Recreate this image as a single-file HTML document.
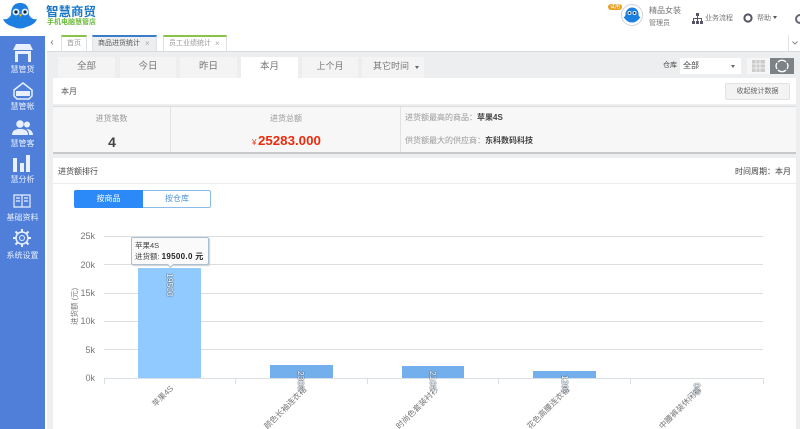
<!DOCTYPE html>
<html lang="zh"><head><meta charset="utf-8"><style>
*{box-sizing:border-box}
html,body{margin:0;padding:0;width:800px;height:429px;overflow:hidden}
#w{position:absolute;left:0;top:0;width:800px;height:429px;overflow:hidden;background:#fff;font-family:"Liberation Sans","Noto Sans CJK SC",sans-serif;font-size:9px;color:#555}
.a{position:absolute;white-space:nowrap}
.side{left:0;top:36px;width:45px;height:393px;background:#4f7fd9}
.si{color:#e8f0ff;font-size:8px;line-height:11px;width:45px;text-align:center;left:0}
.tb{top:35px;height:16px;background:#fff;border:1px solid #dfe3e6;border-bottom:0;font-size:7px;line-height:14px;color:#999;padding-left:5px}
.tb span{position:absolute;top:0;color:#aaa;font-size:8px}
.pt{top:57px;height:21px;background:#f4f4f4;font-size:9.500px;line-height:19px;text-align:center;color:#777}
.g{left:104px;width:659px;height:1px;background:#dedede}
.yl{width:30px;left:65px;text-align:right;font-size:9px;color:#777}
.tk{top:378px;width:1px;height:6px;background:#d8dfe6}
.bar{position:absolute}
.rl{font-size:8px;line-height:10px;color:#777;transform:rotate(-45deg);transform-origin:right top;text-align:right}
.rv{font-size:8.500px;line-height:10px;color:#fff;text-shadow:0 0 1px #456,0 0 1px #456,0 0 1px #678;transform:rotate(90deg);transform-origin:left top}
</style></head><body><div id="w">
<svg class="a" style="left:2px;top:1px" width="36" height="30" viewBox="0 0 36 30">
<path d="M1 18C5 19 7 17 9 14C9 5 13 2 18 2C24 2 27 5 27 14C29 17 31 19 35 18C33 23 28 25 24 26C21 28 15 28 12 26C8 25 3 23 1 18Z" fill="#1d7fe0"/>
<circle cx="14" cy="11" r="3.400" fill="#dff1ff"/><circle cx="23" cy="11" r="3.400" fill="#dff1ff"/>
<circle cx="14" cy="11" r="1.600" fill="#123"/><circle cx="23" cy="11" r="1.600" fill="#123"/>
<path d="M17 13h3l-1.500 3z" fill="#f5c518"/>
</svg>
<div class="a" style="left:46px;top:4px;font-size:12.500px;line-height:16px;font-weight:bold;color:#1b78c8">智慧商贸</div>
<div class="a" style="left:47px;top:18px;font-size:7px;line-height:9px;font-weight:bold;color:#6cbb3c">手机电脑慧管店</div>

<div class="a" style="left:608px;top:4px;width:14px;height:6px;background:#e8a020;border-radius:3px;font-size:5px;line-height:6px;color:#fff;text-align:center">试用</div>
<svg class="a" style="left:621px;top:4px" width="22" height="22" viewBox="0 0 22 22"><circle cx="11" cy="11" r="10.500" fill="#fff" stroke="#cdd2d8"/><path d="M2.500 13C4.500 13 4.500 11 4.500 9C5.500 5 9 3.500 11 3.500C14 3.500 16.500 5 17.500 9C17.500 11 17.500 13 19.500 13C17 17 14 18.500 11 18.500C8 18.500 5 17 2.500 13Z" fill="#1d7fe0"/><circle cx="8.500" cy="9" r="2" fill="#def"/><circle cx="13.500" cy="9" r="2" fill="#def"/><circle cx="8.500" cy="9" r="1" fill="#123"/><circle cx="13.500" cy="9" r="1" fill="#123"/></svg>
<div class="a" style="left:649px;top:5px;font-size:8px;line-height:11px;color:#777">精品女装</div>
<div class="a" style="left:649px;top:19px;font-size:7px;line-height:10px;color:#777">管理员</div>
<svg class="a" style="left:692px;top:13px" width="11" height="11" viewBox="0 0 11 11"><path d="M4 0h3v3H4zM0 8h3v3H0zM4 8h3v3H4zM8 8h3v3H8zM5 3h1v2h4v3H9V6H6v2H5V6H2v2H1V5h4z" fill="#556"/></svg>
<div class="a" style="left:705px;top:13px;font-size:7px;line-height:11px;color:#777">业务流程</div>
<svg class="a" style="left:743px;top:13px" width="10" height="10" viewBox="0 0 10 10"><circle cx="5" cy="5" r="3.600" fill="none" stroke="#556" stroke-width="2"/></svg>
<div class="a" style="left:757px;top:14px;font-size:7px;line-height:10px;color:#777">帮助</div>
<div class="a" style="left:773px;top:16px;border:2.500px solid transparent;border-top:3px solid #555;border-bottom:0"></div>
<svg class="a" style="left:794px;top:13px" width="6" height="12" viewBox="0 0 6 12"><circle cx="6" cy="6" r="4" fill="none" stroke="#667" stroke-width="2"/></svg>

<div class="a side"></div>
<svg class="a" style="left:13px;top:44px" width="20" height="18" viewBox="0 0 20 18"><path d="M3 0h14l3 6H0z" fill="#e8f0ff"/><path d="M2 7h16v11H2z" fill="#e8f0ff"/><path d="M5 10h10v8H5z" fill="#4f7fd9"/></svg>
<div class="a si" style="top:64px">慧管货</div>
<svg class="a" style="left:13px;top:82px" width="20" height="18" viewBox="0 0 20 18"><path d="M1 8L10 1l9 7v6l-3 3H4l-3-3z" fill="none" stroke="#e8f0ff" stroke-width="1.500"/><path d="M3 9h14v5H3z" fill="#e8f0ff"/></svg>
<div class="a si" style="top:101px">慧管帐</div>
<svg class="a" style="left:12px;top:120px" width="21" height="15" viewBox="0 0 21 15"><circle cx="8" cy="4" r="3.800" fill="#e8f0ff"/><path d="M0 15c0-5 4-6 8-6s8 1 8 6z" fill="#e8f0ff"/><circle cx="15" cy="4.500" r="3" fill="#e8f0ff"/><path d="M14 9c4 0 7 2 7 6h-4c0-3-1-5-3-6z" fill="#e8f0ff"/></svg>
<div class="a si" style="top:138px">慧管客</div>
<svg class="a" style="left:13px;top:155px" width="18" height="17" viewBox="0 0 18 17"><path d="M0 3h4v14H0zM7 8h4v9H7zM13 0h4v17h-4z" fill="#e8f0ff"/></svg>
<div class="a si" style="top:174px">慧分析</div>
<svg class="a" style="left:13px;top:194px" width="18" height="14" viewBox="0 0 18 14"><path d="M1 1h16v12H1zM9 1v12M3 4h4M3 7h4M11 4h4M11 7h4" fill="none" stroke="#e8f0ff" stroke-width="1.200"/></svg>
<div class="a si" style="top:212px">基础资料</div>
<svg class="a" style="left:13px;top:229px" width="18" height="18" viewBox="0 0 18 18"><circle cx="9" cy="9" r="6" fill="none" stroke="#e8f0ff" stroke-width="1.500"/><circle cx="9" cy="9" r="2.500" fill="none" stroke="#e8f0ff"/><path d="M9 0v3M9 15v3M0 9h3M15 9h3M2.500 2.500l2 2M13.500 13.500l2 2M2.500 15.500l2-2M13.500 4.500l2-2" stroke="#e8f0ff" stroke-width="2"/></svg>
<div class="a si" style="top:250px">系统设置</div>

<div class="a" style="left:47px;top:51px;width:753px;height:378px;background:#eceef0;border-top:1px solid #d8dbde"></div>
<div class="a" style="left:45px;top:36px;width:2px;height:393px;background:#fff"></div>
<div class="a" style="left:47px;top:36px;width:10px;height:15px;font-size:10px;line-height:13px;color:#666;text-align:center">‹</div>
<div class="a tb" style="left:61px;width:26px;border-top:2px solid #8bc34a">首页</div>
<div class="a tb" style="left:92px;width:65px;background:#eceef0;border-top:2px solid #3b7dc9;color:#555">商品进货统计<span style="left:52px">×</span></div>
<div class="a tb" style="left:163px;width:64px;border-top:2px solid #8bc34a">员工业绩统计<span style="left:51px">×</span></div>
<div class="a" style="left:788px;top:35px;width:12px;height:16px;background:#fff;border-left:1px solid #e3e3e3"></div>
<svg class="a" style="left:792px;top:41px" width="6" height="4" viewBox="0 0 6 4"><path d="M.5.500L3 3 5.500.500" fill="none" stroke="#888"/></svg>

<div class="a pt" style="left:58px;width:57px">全部</div>
<div class="a pt" style="left:120px;width:56px">今日</div>
<div class="a pt" style="left:180px;width:57px">昨日</div>
<div class="a pt" style="left:241px;width:57px;background:#fff">本月</div>
<div class="a pt" style="left:302px;width:56px;font-size:9px">上个月</div>
<div class="a pt" style="left:362px;width:62px;text-align:left;padding-left:11px;font-size:9px">其它时间</div>
<div class="a" style="left:415px;top:66px;border:2.500px solid transparent;border-top:3px solid #666;border-bottom:0"></div>
<div class="a" style="left:663px;top:60px;font-size:7px;line-height:11px;color:#444">仓库</div>
<div class="a" style="left:680px;top:58px;width:61px;height:16px;background:#fff;font-size:8px;line-height:15px;padding-left:3px;color:#444">全部</div>
<div class="a" style="left:731px;top:65px;border:2.500px solid transparent;border-top:3px solid #666;border-bottom:0"></div>
<div class="a" style="left:747px;top:58px;width:23px;height:16px;background:#f6f6f6"></div>
<svg class="a" style="left:752px;top:60px" width="13" height="12" viewBox="0 0 13 12"><path d="M0 0h13v12H0z" fill="#ccc"/><path d="M4 0v12M8 0v12M0 4h13M0 8h13" stroke="#eee"/></svg>
<div class="a" style="left:770px;top:58px;width:24px;height:16px;background:#7d8286"></div>
<svg class="a" style="left:775px;top:59px" width="14" height="14" viewBox="0 0 14 14"><path d="M3 3A5.500 5.500 0 0 1 11 3M11 11A5.500 5.500 0 0 1 3 11M2 4A5.500 5.500 0 0 0 2 10M12 4A5.500 5.500 0 0 1 12 10" fill="none" stroke="#fff" stroke-width="1.300"/></svg>

<div class="a" style="left:53px;top:78px;width:743px;height:26px;background:#fff"></div>
<div class="a" style="left:61px;top:86px;font-size:8px;line-height:11px;color:#555">本月</div>
<div class="a" style="left:725px;top:83px;width:65px;height:17px;background:#f3f3f3;border:1px solid #e2e2e2;border-radius:2px;font-size:7px;line-height:15px;text-align:center;color:#666">收起统计数据</div>

<div class="a" style="left:53px;top:106px;width:743px;height:48px;background:#f7f7f7;border-top:1px solid #dcdcdc;border-bottom:2px solid #c9c9c9"></div>
<div class="a" style="left:170px;top:107px;width:1px;height:45px;background:#e2e2e2"></div>
<div class="a" style="left:400px;top:107px;width:1px;height:45px;background:#e2e2e2"></div>
<div class="a" style="left:53px;top:113px;width:117px;text-align:center;font-size:8px;line-height:11px;color:#999">进货笔数</div>
<div class="a" style="left:53px;top:134px;width:118px;text-align:center;font-size:14px;line-height:16px;font-weight:bold;color:#444">4</div>
<div class="a" style="left:270px;top:113px;font-size:8px;line-height:11px;color:#999">进货总额</div>
<div class="a" style="left:252px;top:137px;font-size:8px;line-height:11px;color:#e8341c">¥</div>
<div class="a" style="left:258px;top:132px;font-size:13.300px;line-height:17px;font-weight:bold;color:#ee2a0c">25283.000</div>
<div class="a" style="left:405px;top:112px;font-size:8px;line-height:12px;color:#999">进货额最高的商品：<b style="color:#444">苹果4S</b></div>
<div class="a" style="left:405px;top:135px;font-size:8px;line-height:12px;color:#999">供货额最大的供应商：<b style="color:#444">东科数码科技</b></div>

<div class="a" style="left:53px;top:158px;width:743px;height:271px;background:#fff"></div>
<div class="a" style="left:53px;top:183px;width:743px;height:1px;background:#ececec"></div>
<div class="a" style="left:58px;top:166px;font-size:8px;line-height:12px;color:#444">进货额排行</div>
<div class="a" style="left:735px;top:166px;font-size:8px;line-height:12px;color:#444">时间周期：本月</div>
<div class="a" style="left:74px;top:190px;width:137px;height:18px;border:1px solid #8cbbe8;border-radius:2px;background:#fff"></div>
<div class="a" style="left:74px;top:190px;width:69px;height:18px;background:#2b8af7;border-radius:2px 0 0 2px;color:#fff;font-size:8px;line-height:18px;text-align:center">按商品</div>
<div class="a" style="left:143px;top:190px;width:68px;height:18px;color:#4c94dc;font-size:8px;line-height:18px;text-align:center">按仓库</div>

<div class="a g" style="top:236px"></div><div class="a g" style="top:264px"></div><div class="a g" style="top:293px"></div><div class="a g" style="top:321px"></div><div class="a g" style="top:349px"></div>
<div class="a g" style="top:378px;background:#d8dfe6"></div>
<div class="a yl" style="top:231px">25k</div><div class="a yl" style="top:260px">20k</div><div class="a yl" style="top:288px">15k</div><div class="a yl" style="top:316px">10k</div><div class="a yl" style="top:345px">5k</div><div class="a yl" style="top:373px">0k</div>
<div class="a" style="left:70px;top:325px;font-size:7.500px;line-height:9px;color:#777;transform:rotate(-90deg);transform-origin:left top">进货额 (元)</div>
<div class="a tk" style="left:104px"></div><div class="a tk" style="left:235px"></div><div class="a tk" style="left:367px"></div><div class="a tk" style="left:498px"></div><div class="a tk" style="left:630px"></div><div class="a tk" style="left:763px"></div>

<div class="bar" style="left:138px;top:268px;width:63px;height:110px;background:#90caff"></div>
<div class="bar" style="left:270px;top:365px;width:63px;height:13px;background:#72afec"></div>
<div class="bar" style="left:402px;top:366px;width:62px;height:12px;background:#72afec"></div>
<div class="bar" style="left:533px;top:371px;width:63px;height:7px;background:#72afec"></div>

<div class="a rl" style="right:631px;top:384px">苹果4S</div>
<div class="a rl" style="right:498px;top:385px">颜色长袖连衣裙</div>
<div class="a rl" style="right:366px;top:385px">时尚色套装衬衫</div>
<div class="a rl" style="right:235px;top:385px">花色高腰连衣裙</div>
<div class="a rl" style="right:103px;top:385px">中腰裤装休闲裤</div>

<div class="a rv" style="left:175px;top:273px">19500</div>
<div class="a rv" style="left:306px;top:371px">2300</div>
<div class="a rv" style="left:438px;top:371px">2100</div>
<div class="a rv" style="left:570px;top:375px">1200</div>
<div class="a rv" style="left:702px;top:383px">0.0</div>

<div class="a" style="left:131px;top:237px;width:78px;height:28px;background:#fafafa;border:1px solid #a9bfd2;border-radius:2px;box-shadow:1px 1px 1px #ccc"></div>
<div class="a" style="left:168px;top:262px;width:5px;height:5px;background:#fafafa;border-right:1px solid #a9bfd2;border-bottom:1px solid #a9bfd2;transform:rotate(45deg)"></div>
<div class="a" style="left:135px;top:241px;font-size:7.500px;line-height:10px;color:#444">苹果4S</div>
<div class="a" style="left:135px;top:251px;font-size:7.500px;line-height:11px;color:#444">进货额: <b style="color:#222;font-size:8px;letter-spacing:.3px">19500.0 元</b></div>
</div></body></html>
